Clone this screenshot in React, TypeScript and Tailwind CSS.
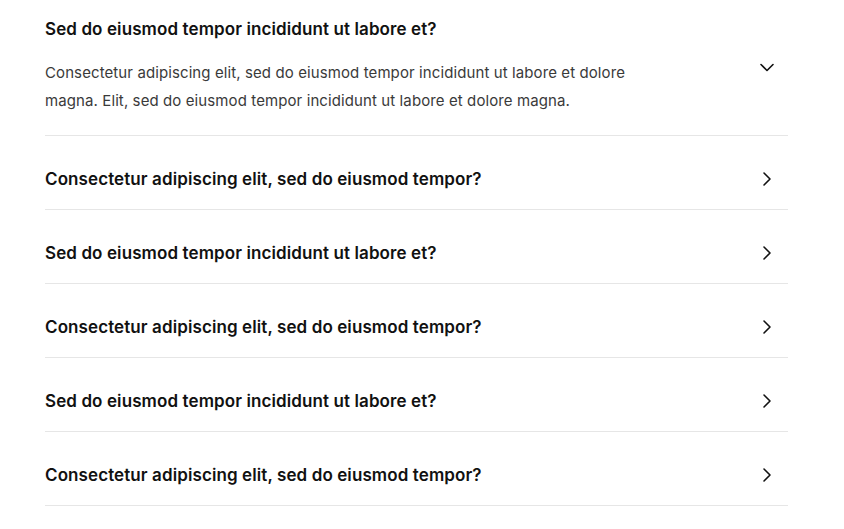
import React from "react";

const Chevron = ({ dir }: { dir: "down" | "right" }) => (
  <svg width="20" height="20" viewBox="0 0 20 20" fill="none" stroke="#111" strokeWidth="1.6" strokeLinecap="round" strokeLinejoin="round">
    {dir === "down" ? <path d="M4 7.5l6 6 6-6" /> : <path d="M7 4l6 6-6 6" />}
  </svg>
);

const items = [
  "Consectetur adipiscing elit, sed do eiusmod tempor?",
  "Sed do eiusmod tempor incididunt ut labore et?",
  "Consectetur adipiscing elit, sed do eiusmod tempor?",
  "Sed do eiusmod tempor incididunt ut labore et?",
  "Consectetur adipiscing elit, sed do eiusmod tempor?",
];

export default function App() {
  return (
    <div className="w-[844px] h-[529px] bg-white pl-[45px] pr-[56px]" style={{ fontFamily: "Inter, 'Noto Sans', sans-serif" }}>
      <div className="flex items-center justify-between border-b border-[#e6e6e6] pt-[17px] pb-[20px] pr-[11px]">
        <div className="w-[610px]">
          <h3 className="text-[17px] leading-[24px] font-semibold tracking-[0.1px] text-[#111]">Sed do eiusmod tempor incididunt ut labore et?</h3>
          <p className="mt-[18px] text-[15px] leading-[28px] tracking-[0.1px] text-[#3a3a3a]">
            Consectetur adipiscing elit, sed do eiusmod tempor incididunt ut labore et dolore magna. Elit, sed do eiusmod tempor incididunt ut labore et dolore magna.
          </p>
        </div>
        <div className="translate-y-[1px]">
          <Chevron dir="down" />
        </div>
      </div>
      {items.map((t, i) => (
        <div key={i} className="flex items-center justify-between border-b border-[#e6e6e6] pt-[31px] pb-[18px] pr-[11px]">
          <h3 className="text-[17px] leading-[24px] font-semibold tracking-[0.1px] text-[#111]">{t}</h3>
          <Chevron dir="right" />
        </div>
      ))}
    </div>
  );
}
